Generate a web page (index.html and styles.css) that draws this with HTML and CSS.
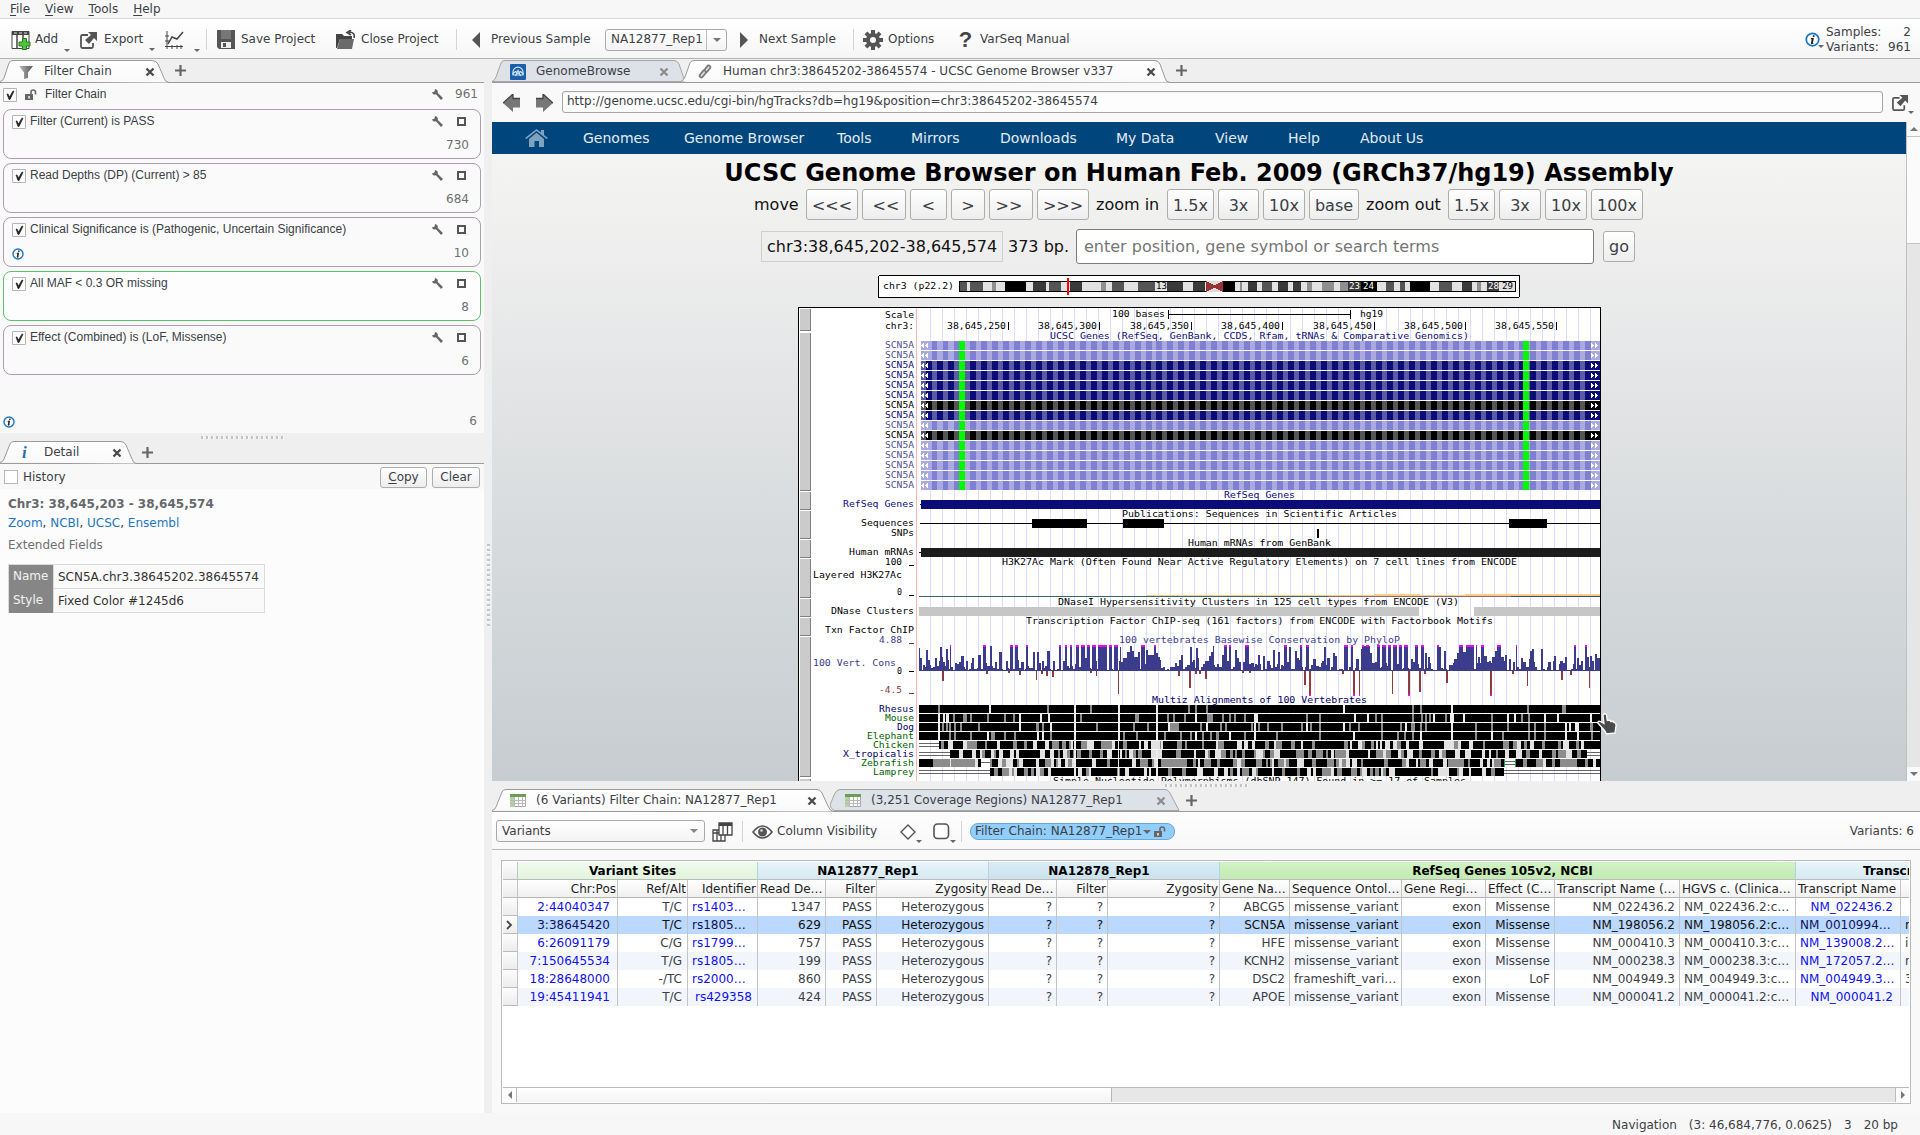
FILE: index.html
```html
<!DOCTYPE html>
<html lang="en">
<head>
<meta charset="utf-8">
<title>VarSeq</title>
<link rel="stylesheet" href="styles.css">
</head>
<body>
<svg class="defs" width="0" height="0" aria-hidden="true">
  <defs>
    <linearGradient id="steel" x1="0" x2="1"><stop offset="0" stop-color="#bbb"/><stop offset="1" stop-color="#555"/></linearGradient>
    <linearGradient id="tabw" x1="0" x2="0" y1="0" y2="1"><stop offset="0" stop-color="#ffffff"/><stop offset="1" stop-color="#f9f9f9"/></linearGradient>
  </defs>
  <symbol id="i-add" viewBox="0 0 20 20"><path d="M1 1.500h17v17h-17z" fill="#fff" stroke="#444"/><path d="M1 1h17v4h-17z" fill="#444"/><path d="M3 3h3M8 3h3M13 3h3" stroke="#ddd"/><path d="M6 5v13M12 5v13" stroke="#444" stroke-width="1.500"/><path d="M11.500 8.500h4v3.500h3.500v4h-3.500v3.500h-4v-3.500H8v-4h3.500z" fill="#4fc43c" stroke="#2c7d1c"/></symbol>
  <symbol id="i-export" viewBox="0 0 18 18"><path d="M8 4H2.500Q1 4 1 5.500v10Q1 17 2.500 17h9q1.500 0 1.500-1.500V12" fill="none" stroke="#555" stroke-width="1.800"/><path d="M8 1h9v9l-3-3-5 6-4-4 6-5z" fill="#555"/></symbol>
  <symbol id="i-chart" viewBox="0 0 20 20"><path d="M3 1v18M1 16.500h18M1 6h4M1 11h4M8 15v4M13 15v4M17 15v4" stroke="#444" fill="none"/><path d="M4 14l4-7 5 2 6-7" fill="none" stroke="#444" stroke-width="1.500"/></symbol>
  <symbol id="i-save" viewBox="0 0 18 19"><path d="M0 0h18v19H2l-2-2z" fill="#555"/><path d="M4 0h10v9H4z" fill="#777"/><path d="M4 12h10v6H4z" fill="#eee"/><path d="M6 13h3v4H6z" fill="#555"/></symbol>
  <symbol id="i-close" viewBox="0 0 21 20"><path d="M1 7V4h6l2 2h8v3H5L2 18H1z" fill="#444"/><path d="M5 9h14l-2 10H2z" fill="#6a6a6a"/><path d="M19 8c1-4-1-6-5-6M16 0l-4 2.500L16 5" stroke="#444" stroke-width="1.600" fill="none"/></symbol>
  <symbol id="i-gear" viewBox="0 0 20 20"><g fill="#555"><circle cx="10" cy="10" r="7"/><path d="M8 0h4v20H8z"/><path d="M0 8h20v4H0z"/><path d="M8 0h4v20H8z" transform="rotate(45 10 10)"/><path d="M8 0h4v20H8z" transform="rotate(-45 10 10)"/></g><circle cx="10" cy="10" r="3" fill="#fafafa"/></symbol>
  <symbol id="i-funnel" viewBox="0 0 14 14"><path d="M0 1h14L9 7.500V13l-4 1V7.500z" fill="url(#steel)"/></symbol>
  <symbol id="i-x" viewBox="0 0 10 10"><path d="M1.500 1.500l7 7M8.500 1.500l-7 7" stroke="currentColor" stroke-width="2.300"/></symbol>
  <symbol id="i-plus" viewBox="0 0 11 11"><path d="M5.500 0v11M0 5.500h11" stroke="#666" stroke-width="2.200"/></symbol>
  <symbol id="i-check" viewBox="0 0 14 14"><path d="M.5.5h13v13H.5z" fill="#fff" stroke="#b5b5b5"/><path d="M4 6l1 0 1.500 3L10 3l1 .3L7 11.500H6z" fill="#222" stroke="#222" stroke-width=".7"/></symbol>
  <symbol id="i-lock" viewBox="0 0 12 11"><path d="M0 5h8v6H0z" fill="#666"/><path d="M6 5V3q0-2 2.200-2T10.500 3v2.500" fill="none" stroke="#666" stroke-width="1.600"/><path d="M3.300 7h1.400v2.500H3.300z" fill="#fff"/></symbol>
  <symbol id="i-wrench" viewBox="0 0 11 11"><path d="M3 0l-.3 2L1.800 3 0 3.200C.5 5.500 2.500 6 4 5.300L9 11l2-2L5.800 4C6.300 2 5 .3 3 0z" fill="#666"/></symbol>
  <symbol id="i-info" viewBox="0 0 12 12"><circle cx="6" cy="6" r="5" fill="#fff" stroke="#1d76c4" stroke-width="1.400"/><path d="M6.200 2.500h1.400v1.400H6.200zM4.800 4.800h2.300l-.8 4h1L5.500 9.800l-.8-.5.600-3.500h-.8z" fill="#222"/></symbol>
  <symbol id="i-left" viewBox="0 0 17 18"><path d="M0 9L10 0v4.500h7v9h-7V18z" fill="#777"/><path d="M0 9L10 0v4.500h7" fill="none" stroke="#444" stroke-width="1.300"/></symbol>
  <symbol id="i-link" viewBox="0 0 14 15"><g fill="#ddd" stroke="#777" stroke-width="1.700"><rect x="7.500" y="0.800" width="3.400" height="8" rx="1.700" transform="rotate(38 9 5)"/><rect x="3" y="5.800" width="3.400" height="8" rx="1.700" transform="rotate(38 4.500 10)"/></g></symbol>
  <symbol id="i-gb" viewBox="0 0 16 16"><rect width="16" height="16" rx="1" fill="#1b5fa8"/><path d="M3 11V8a5 4.800 0 0 1 10 0v3z" fill="none" stroke="#cfe4f8" stroke-width="1.200"/><path d="M2.500 10l3-2.500 2.500 2 2.500-2 3 2.500M5.500 12l2.500-5.500 2.500 5.500" fill="none" stroke="#cfe4f8" stroke-width="1.200"/></symbol>
  <symbol id="i-home" viewBox="0 0 23 18"><path d="M0 9L11.500 0 16 3.500V1h3v5l4 3-1.500 1L11.500 2 1.500 10z" fill="#7fa2bf"/><path d="M4 10l7.500-6.200L19 10v8h-5v-6H9.500v6H4z" fill="#7fa2bf"/></symbol>
  <symbol id="i-grid" viewBox="0 0 16 13"><path d="M.5.5h15v12H.5z" fill="#fdfdfd" stroke="#a5a5a5"/><path d="M0 0h16v3H0z" fill="#6e9e55"/><path d="M0 3h4v10H0z" fill="#b5d3a0"/><path d="M4.500 3v10M8.500 3v10M12.500 3v10M0 6.500h16M0 9.500h16" stroke="#b8b8b8"/></symbol>
  <symbol id="i-tables" viewBox="0 0 21 20"><path d="M1 8h12v11H1zM5 8v11M9 8v11M1 11h12" fill="#fff" stroke="#444" stroke-width="1.300"/><path d="M7 1h13v12H7z" fill="#fff" stroke="#444" stroke-width="1.300"/><path d="M7 1h13v3H7z" fill="#444"/><path d="M11 4v9M15.500 4v9" stroke="#444" stroke-width="1.300"/></symbol>
  <symbol id="i-eye" viewBox="0 0 21 14"><path d="M1 7Q10.500-5 20 7 10.500 19 1 7z" fill="#fff" stroke="#555" stroke-width="1.700"/><circle cx="10.500" cy="7" r="4.500" fill="#555"/><circle cx="9.500" cy="5.500" r="1.300" fill="#ddd"/></symbol>
</svg>

<nav class="menubar"><span><u>F</u>ile</span><span><u>V</u>iew</span><span><u>T</u>ools</span><span><u>H</u>elp</span></nav>

<header class="toolbar">
  <div class="tool t-add"><svg width="20" height="20"><use href="#i-add"/></svg>Add<i class="caret"></i></div>
  <div class="tool t-export"><svg width="18" height="18"><use href="#i-export"/></svg>Export<i class="caret"></i></div>
  <div class="tool"><svg width="20" height="20"><use href="#i-chart"/></svg><i class="caret"></i></div>
  <i class="sep"></i>
  <div class="tool t-save"><svg width="18" height="19"><use href="#i-save"/></svg>Save Project</div>
  <div class="tool t-close"><svg width="21" height="20"><use href="#i-close"/></svg>Close Project</div>
  <i class="sep"></i>
  <div class="tool t-prev"><i class="tri tri-left"></i>Previous Sample</div>
  <div class="combo sample-combo"><span>NA12877_Rep1</span><b><i class="caret"></i></b></div>
  <div class="tool t-next"><i class="tri tri-right"></i>Next Sample</div>
  <i class="sep"></i>
  <div class="tool t-opt"><svg width="20" height="20"><use href="#i-gear"/></svg>Options</div>
  <div class="tool t-manual"><b class="qmark">?</b>VarSeq Manual</div>
  <div class="totals"><svg width="15" height="15"><use href="#i-info"/></svg><i class="caret"></i><dl><dt>Samples:</dt><dd>2</dd><dt>Variants:</dt><dd>961</dd></dl></div>
</header>

<main class="workspace">
  <aside class="side">
    <div class="tabs">
      <div class="tab active tab-filter"><svg class="shape" width="170" height="24"><path d="M0 22.500Q3 22 4 19L9 4Q10 1.500 13 1.500H152Q156 1.500 158 5L164 19Q165 23 169 23.500" fill="url(#tabw)" stroke="#9a9a9a"/></svg><svg width="14" height="14"><use href="#i-funnel"/></svg><span>Filter Chain</span><svg class="x" width="10" height="10"><use href="#i-x"/></svg></div>
      <svg class="plus" width="11" height="11"><use href="#i-plus"/></svg>
    </div>
    <section class="filters">
      <div class="chain-head"><svg width="14" height="14"><use href="#i-check"/></svg><svg class="lock" width="12" height="11"><use href="#i-lock"/></svg><span class="fname">Filter Chain</span><svg class="wrench" width="11" height="11"><use href="#i-wrench"/></svg><span class="count">961</span></div>
      <div class="card"><div class="row"><svg width="14" height="14"><use href="#i-check"/></svg><span class="fname">Filter (Current) is PASS</span><svg class="wrench" width="11" height="11"><use href="#i-wrench"/></svg><i class="sq"></i></div><div class="row low"><span class="count">730</span></div></div>
      <div class="card"><div class="row"><svg width="14" height="14"><use href="#i-check"/></svg><span class="fname">Read Depths (DP) (Current) &gt; 85</span><svg class="wrench" width="11" height="11"><use href="#i-wrench"/></svg><i class="sq"></i></div><div class="row low"><span class="count">684</span></div></div>
      <div class="card"><div class="row"><svg width="14" height="14"><use href="#i-check"/></svg><span class="fname">Clinical Significance is (Pathogenic, Uncertain Significance)</span><svg class="wrench" width="11" height="11"><use href="#i-wrench"/></svg><i class="sq"></i></div><div class="row low"><svg width="12" height="12"><use href="#i-info"/></svg><span class="count">10</span></div></div>
      <div class="card green"><div class="row"><svg width="14" height="14"><use href="#i-check"/></svg><span class="fname">All MAF &lt; 0.3 OR missing</span><svg class="wrench" width="11" height="11"><use href="#i-wrench"/></svg><i class="sq"></i></div><div class="row low"><span class="count">8</span></div></div>
      <div class="card"><div class="row"><svg width="14" height="14"><use href="#i-check"/></svg><span class="fname">Effect (Combined) is (LoF, Missense)</span><svg class="wrench" width="11" height="11"><use href="#i-wrench"/></svg><i class="sq"></i></div><div class="row low"><span class="count">6</span></div></div>
      <div class="chain-foot"><svg width="12" height="12"><use href="#i-info"/></svg><span class="count">6</span></div>
    </section>
    <div class="grip-row"><i class="grip"></i></div>
    <div class="tabs detail-tabs">
      <div class="tab active tab-detail"><svg class="shape" width="137" height="23"><path d="M0 21.500Q3 21 4 18L10 3Q11 .5 14 .5H121Q124 .5 126 4L132 18Q133 22 136 22.500" fill="url(#tabw)" stroke="#9a9a9a"/></svg><em class="ital">i</em><span>Detail</span><svg class="x" width="10" height="10"><use href="#i-x"/></svg></div>
      <svg class="plus" width="11" height="11"><use href="#i-plus"/></svg>
    </div>
    <div class="history"><i class="box"></i><span>History</span><button><u>C</u>opy</button><button>Clear</button></div>
    <section class="detail">
      <h2>Chr3: 38,645,203 - 38,645,574</h2>
      <p class="links"><a>Zoom</a>, <a>NCBI</a>, <a>UCSC</a>, <a>Ensembl</a></p>
      <p class="ext">Extended Fields</p>
      <div class="fields"><b>Name</b><span>SCN5A.chr3.38645202.38645574</span><b>Style</b><span>Fixed Color #1245d6</span></div>
    </section>
  </aside>
  <div class="vgrip"><i></i></div>

  <div class="content">
    <div class="tabs">
      <div class="tab tab-gb"><svg class="shape" width="194" height="24"><path d="M0 22.500Q3 21 4 18L9 4Q10 1.500 13 1.500H182Q185 1.500 187 5L193 22.500z" fill="#dde1e8" stroke="#a5a5a5"/></svg><svg width="16" height="16"><use href="#i-gb"/></svg><span>GenomeBrowse</span><svg class="x dim" width="10" height="10"><use href="#i-x"/></svg></div>
      <div class="tab active tab-ucsc"><svg class="shape" width="490" height="24"><path d="M0 22.500Q3 21 4 18L9 4Q10 1.500 13 1.500H474Q477 1.500 479 5L484 19Q485 23 489 23.500" fill="url(#tabw)" stroke="#9a9a9a"/></svg><svg width="14" height="15"><use href="#i-link"/></svg><span>Human chr3:38645202-38645574 - UCSC Genome Browser v337</span><svg class="x" width="10" height="10"><use href="#i-x"/></svg></div>
      <svg class="plus" width="11" height="11"><use href="#i-plus"/></svg>
    </div>
    <div class="urlbar">
      <svg width="17" height="18"><use href="#i-left"/></svg><svg class="fwd" width="17" height="18"><use href="#i-left"/></svg>
      <div class="url">http://genome.ucsc.edu/cgi-bin/hgTracks?db=hg19&amp;position=chr3:38645202-38645574</div>
      <svg class="ext-icon" width="17" height="17"><use href="#i-export"/></svg><i class="caret"></i>
    </div>
    <div class="browser">
      <div class="page">
        <nav class="ucsc-nav"><svg width="23" height="18"><use href="#i-home"/></svg><span>Genomes</span><span>Genome Browser</span><span>Tools</span><span>Mirrors</span><span>Downloads</span><span>My Data</span><span>View</span><span>Help</span><span>About Us</span></nav>
        <h1>UCSC Genome Browser on Human Feb. 2009 (GRCh37/hg19) Assembly</h1>
        <div class="moves">
          <span class="w-move">move</span><button>&lt;&lt;&lt;</button><button>&lt;&lt;</button><button>&lt;</button><button>&gt;</button><button>&gt;&gt;</button><button>&gt;&gt;&gt;</button>
          <span>zoom in</span><button>1.5x</button><button>3x</button><button>10x</button><button>base</button>
          <span>zoom out</span><button>1.5x</button><button>3x</button><button>10x</button><button>100x</button>
        </div>
        <div class="position"><span class="pos">chr3:38,645,202-38,645,574</span><span class="bp">373 bp.</span><span class="search">enter position, gene symbol or search terms</span><button>go</button></div>
        <svg id="ideogram" class="ideogram" width="642" height="23" viewBox="878 275 642 23"></svg>
        <svg id="tracks" class="tracks" width="803" height="474" viewBox="798 307 803 474"></svg>
        <svg class="hand" width="21" height="22" viewBox="0 0 21 22"><path d="M6 2q2-2.500 3.500 0l.8 5.500 2.500-.3 1 1.300 2.500-.2.800 1.300q2 .3 2 2.400L18 20l-8.500 1L7.500 17.500.8 10q.2-2.500 2.700-1.500L7 10.500z" fill="#4b4b4b" stroke="#fff" stroke-width="1.300"/></svg>
      </div>
      <div class="vscroll"><b><i class="up"></i></b><span class="thumb"></span><b class="bottom"><i class="caret"></i></b></div>
    </div>
    <div class="grip-row mid"><i class="grip"></i></div>
    <div class="tabs table-tabs">
      <div class="tab active tab-var"><svg class="shape" width="342" height="23"><path d="M0 21.500Q3 21 4 18L10 3Q11 .5 14 .5H325Q328 .5 330 4L336 17Q338 21.500 341 22.500" fill="url(#tabw)" stroke="#9a9a9a"/></svg><svg width="16" height="13"><use href="#i-grid"/></svg><span>(6 Variants) Filter Chain: NA12877_Rep1</span><svg class="x" width="10" height="10"><use href="#i-x"/></svg></div>
      <div class="tab tab-cov"><svg class="shape" width="350" height="23"><path d="M0 16L5 4Q7 .5 10 .5H335Q338 .5 340 4L349 21.500H4Q1 20 0 16z" fill="#dde1e8" stroke="#a5a5a5"/></svg><svg width="16" height="13"><use href="#i-grid"/></svg><span>(3,251 Coverage Regions) NA12877_Rep1</span><svg class="x dim" width="10" height="10"><use href="#i-x"/></svg></div>
      <svg class="plus" width="11" height="11"><use href="#i-plus"/></svg>
    </div>
    <div class="tablebar">
      <div class="combo wide"><span>Variants</span><i class="caret big"></i></div>
      <svg width="21" height="20"><use href="#i-tables"/></svg>
      <i class="sep"></i>
      <div class="tool"><svg width="21" height="14"><use href="#i-eye"/></svg>Column Visibility</div>
      <div class="tool"><svg width="16" height="16" viewBox="0 0 16 16"><path d="M8 1l7 7-7 7-7-7z" fill="#fff" stroke="#555" stroke-width="1.400"/></svg><i class="caret"></i></div>
      <div class="tool"><svg width="17" height="17" viewBox="0 0 17 17"><rect x="1" y="1" width="14.500" height="14.500" rx="3.500" fill="#fff" stroke="#555" stroke-width="1.600"/></svg><i class="caret"></i></div>
      <i class="sep"></i>
      <div class="pill">Filter Chain: NA12877_Rep1<i class="caret big"></i><svg width="12" height="11"><use href="#i-lock"/></svg></div>
      <div class="nvar">Variants: 6</div>
    </div>
    <div class="tablewrap">
      <div class="frame">
        <div id="grid" class="grid"></div>
        <div class="hscroll"><b><i class="lf"></i></b><span></span><em></em><b><i class="rt"></i></b></div>
      </div>
    </div>
  </div>
</main>
<footer class="status"><span>Navigation</span><span>(3: 46,684,776, 0.0625)</span><span>3</span><span>20 bp</span></footer>
<script src="app.js"></script>
</body>
</html>
```
FILE: styles.css
```css
* { box-sizing: border-box; }
body { margin: 0; width: 1920px; height: 1135px; overflow: hidden; background: #efefef; color: #3b4045; font: 12px/15px "DejaVu Sans", sans-serif; display: flex; flex-direction: column; }
svg { display: block; flex: none; }
.defs { position: absolute; }
i, em { font-style: normal; }
button { font: inherit; color: #3b4045; background: linear-gradient(#fff, #ededed); border: 1px solid #adadad; border-radius: 3px; padding: 0; }
u { text-decoration: underline; text-underline-offset: 2px; }
.caret { width: 0; height: 0; border: 3px solid transparent; border-top: 3px solid #666; border-bottom: 0; flex: none; }
.caret.big { border-width: 4px 4px 0; }
.menubar { height: 19px; background: #f7f7f7; border-bottom: 1px solid #d9d9d9; display: flex; padding-left: 10px; gap: 15px; line-height: 19px; }
.toolbar { height: 40px; border-bottom: 1px solid #b4b4b4; background: linear-gradient(#fff, #f6f6f6); padding: 2px 0 0 11px; display: grid; align-items: center;
  grid-template-columns: 69px 84px 42px 11px 118px 121px 16px 133px 135px 113px 10px 95px 847px 106px; }
.tool { display: flex; align-items: center; white-space: nowrap; gap: 4px; }
.tool .caret, .totals .caret { align-self: flex-end; margin-bottom: -2px; }
.t-add .caret { margin-left: 2px; }
.t-export { gap: 6px; }
.t-export .caret { margin-left: 0; }
.toolbar .tool:nth-child(3) { gap: 10px; }
.t-save { gap: 6px; }
.t-close { gap: 5px; }
.t-prev, .t-next { gap: 11px; }
.t-opt { gap: 5px; }
.t-manual { gap: 7px; }
.sep { width: 1px; height: 21px; background: #d4d4d4; }
.tri { width: 0; height: 0; border: 8px solid transparent; }
.tri-left { border-right: 8px solid #555; border-left: 0; }
.tri-right { border-left: 8px solid #555; border-right: 0; }
.qmark { font: bold 22px/20px "Liberation Sans", sans-serif; color: #444; width: 15px; text-align: center; }
.combo { display: flex; border: 1px solid #a9a9a9; border-radius: 3px; background: linear-gradient(#fff, #f4f4f4); height: 22px; align-items: center; padding-left: 5px; }
.sample-combo { width: 122px; align-self: center; }
.sample-combo b { margin-left: auto; border-left: 1px solid #bbb; width: 20px; height: 20px; display: flex; align-items: center; justify-content: center; }
.sample-combo .caret { border-width: 4px 4px 0; border-top-color: #777; }
.totals { display: flex; align-items: center; width: 106px; }
.totals .caret { margin: 0 2px 7px -2px; }
.totals dl { margin: 0; display: grid; grid-template-columns: 58px 27px; font-size: 12px; }
.totals dd { margin: 0; text-align: right; }

.workspace { display: flex; height: 1054px; }
.side { width: 484px; display: flex; flex-direction: column; }
.tabs { height: 24px; display: flex; background: #efefef; border-bottom: 1px solid #9a9a9a; }
.tab { position: relative; display: flex; align-items: center; height: 24px; padding-top: 1px; }
.tab > *:not(.shape) { position: relative; }
.tab .shape { position: absolute; left: 0; top: 0; }
.tab .x { margin-left: auto; color: #4a4a4a; }
.tab .dim { color: #8d8d8d; }
.plus { align-self: center; }
.tab-filter { width: 169px; padding-left: 19px; padding-right: 14px; gap: 11px; }
.tab-filter + .plus { margin-left: 6px; }
.filters { height: 350px; background: #f9f9f9; padding: 4px 4px 0 3px; }
.chain-head { height: 15px; display: flex; align-items: center; margin-bottom: 7px; }
.chain-head .lock { margin: 0 8px; }
.fname { font: 12px/15px "Liberation Sans", Arial, sans-serif; }
.wrench { margin-left: auto; }
.count { color: #6d7073; margin-left: auto; }
.chain-head .wrench { margin-right: 12px; }
.chain-head .count { margin: 0; width: 23px; text-align: right; margin-right: 2px; }
.card { height: 50px; width: 478px; margin-bottom: 4px; border: 1px solid #ae9cb0; border-radius: 8px; background: #fafafa; padding: 4px 11px 0 8px; }
.card.green { border-color: #5fbf6c; background: #fdfdfd; }
.row { display: flex; align-items: center; height: 15px; }
.row .fname { margin-left: 4px; }
.row.low { margin-top: 9px; }
.sq { width: 9px; height: 9px; border: 2px solid #555; margin: 0 3px 0 14px; }
.chain-foot { display: flex; align-items: center; margin-top: 39px; padding-right: 3px; }
.grip-row { height: 8px; padding: 3px 0 0 201px; }
.grip-row.mid { height: 8px; padding: 3px 0 0 673px; }
.grip { display: block; width: 84px; height: 3px; background: repeating-linear-gradient(90deg, #c4c4c4 0 2px, #fafafa 2px 3px, transparent 3px 5px); }
.detail-tabs { height: 23px; }
.detail-tabs .tab, .table-tabs .tab { height: 23px; padding-top: 0; }
.tab-detail { width: 137px; padding: 0 16px 0 22px; }
.tab-detail .x { margin-right: -1px; }
.tab-detail span { margin-left: 14px; }
.tab-detail + .plus { margin-left: 5px; }
.ital { font: italic bold 17px/18px "Liberation Serif", serif; color: #2b6fb0; width: 8px; }
.history { height: 25px; background: #f8f8f8; display: flex; align-items: center; padding: 1px 4px 0; }
.box { width: 14px; height: 14px; border: 1px solid #b8b8b8; background: #fff; margin-right: 5px; }
.history button { width: 47px; height: 21px; margin-left: auto; padding-top: 1px; }
.history button:last-child { width: 48px; margin-left: 5px; }
.detail { flex: 1; background: #fcfcfc; padding: 7px 8px; }
.detail h2 { margin: 0; font-size: 12px; line-height: 17px; color: #66696c; }
.detail p { margin: 0; }
.links { line-height: 21px; color: #333; }
.links a { color: #1d76c4; }
.detail .ext { color: #6d7073; line-height: 23px; margin-bottom: 7px; }
.fields { display: grid; grid-template-columns: 44px 211px; width: 257px; border: 1px solid #dadada; background: #fafafa; height: 49px; }
.fields b { background: #868686; color: #f2f2f2; font-weight: 400; padding-left: 4px; line-height: 22px; }
.fields span { border: 1px solid #dadada; border-width: 0 0 1px 1px; padding-left: 4px; line-height: 24px; color: #333; height: 24px; }
.vgrip { width: 8px; padding: 485px 0 0 3px; }
.vgrip i { display: block; width: 3px; height: 84px; background: repeating-linear-gradient(#c4c4c4 0 2px, #fafafa 2px 3px, transparent 3px 5px); }

.content { width: 1428px; display: flex; flex-direction: column; }
.tab-gb { width: 189px; padding: 1px 12px 0 18px; gap: 10px; }
.tab-ucsc { width: 489px; padding: 1px 14px 0 17px; gap: 11px; z-index: 1; }
.tab-ucsc + .plus { margin-left: 6px; }
.urlbar { height: 39px; background: #f9f9f9; display: flex; align-items: center; padding-left: 11px; }
.fwd { transform: scaleX(-1); margin: 0 9px 0 16px; }
.url { width: 1321px; height: 22px; border: 1px solid #a5a5a5; border-radius: 3px; background: linear-gradient(#f4f4f4, #fdfdfd 3px); padding-left: 4px; line-height: 19px; margin-top: -1px; }
.ext-icon { margin-left: 9px; }
.urlbar .caret { align-self: flex-end; margin: 0 0 8px -1px; }
.browser { height: 659px; display: flex; }
.page { width: 1414px; position: relative; overflow: hidden; color: #111; background: linear-gradient(#f4f4f2 32px, #ededed 140px, #d9dcde 390px, #c6cdd1); font-size: 16px; line-height: 20px; }
.ucsc-nav { height: 32px; background: #00457c; color: #e4ecf3; font-size: 14px; display: grid; align-items: center; padding-left: 33px; grid-template-columns: 58px 101px 153px 74px 89px 116px 99px 73px 72px 100px; white-space: nowrap; }
h1 { margin: 3px 0 0; font-size: 24px; line-height: 33px; color: #000; text-align: center; }
.moves { display: flex; gap: 4px; height: 31px; align-items: center; white-space: nowrap; padding-left: 262px; line-height: 31px; margin-top: -1px; }
.moves button, .position button { height: 31px; flex: none; }
.moves button { width: 42px; }
.moves span { flex: none; }
.moves .w-move { width: 48px; }
.moves button:nth-child(2), .moves button:nth-child(7), .moves button:nth-child(17) { width: 52px; }
.moves button:nth-child(3) { width: 44px; padding-left: 4px; }
.moves button:nth-child(4) { width: 37px; }
.moves button:nth-child(5) { width: 34px; }
.moves button:nth-child(6) { width: 44px; padding-right: 4px; }
.moves button:nth-child(9), .moves button:nth-child(14) { width: 47px; }
.moves button:nth-child(10) { width: 41px; }
.moves button:nth-child(12) { width: 50px; }
.moves span:nth-child(8) { width: 70px; padding-left: 3px; }
.moves span:nth-child(13) { width: 81px; padding-left: 3px; }
.position { display: flex; align-items: center; height: 35px; margin-top: 9px; padding-left: 269px; white-space: nowrap; }
.pos { border: 1px solid #cfcfcf; width: 242px; height: 31px; line-height: 29px; padding-left: 5px; }
.bp { width: 73px; padding-left: 5px; }
.search { width: 518px; height: 35px; border: 1px solid #7b7b7b; border-radius: 3px; background: #fff; color: #757575; line-height: 33px; padding-left: 7px; }
.position button { width: 32px; margin-left: 9px; }
.ideogram { margin: 11px 0 0 386px; }
.tracks { margin: 9px 0 0 306px; }
.tracks text, .ideogram text { font-family: "DejaVu Sans Mono", monospace; font-size: 8.3px; }
.hand { position: absolute; left: 1105px; top: 591px; }
.vscroll { width: 14px; background: #e6e6e6; border-left: 1px solid #c0c0c0; display: flex; flex-direction: column; }
.vscroll b { height: 14px; background: #fafafa; display: flex; align-items: center; justify-content: center; }
.vscroll .thumb { height: 108px; background: #fbfbfb; border: 1px solid #c4c4c4; border-width: 1px 0; }
.vscroll .bottom { margin-top: auto; }
.vscroll i { border-width: 4px 4px 0; border-top-color: #777; }
.vscroll .up { border: 4px solid transparent; border-top: 0; border-bottom-color: #777; }
.table-tabs { height: 23px; }
.tab-var { width: 338px; padding: 0 13px 0 18px; gap: 10px; z-index: 1; }
.tab-cov { width: 350px; padding: 0 14px 0 15px; gap: 10px; }
.table-tabs .plus { margin-left: 6px; }
.tablebar { height: 38px; background: linear-gradient(#fdfdfd, #f8f8f8); border-bottom: 1px solid #b8b8b8; display: grid; align-items: center; padding: 2px 0 0 4px;
  grid-template-columns: 216px 30px 10px 148px 33px 28px 9px 300px 644px; }
.wide { width: 209px; }
.wide .caret { margin-left: auto; margin-right: 6px; border-top-color: #888; }
.tablebar .combo { margin-top: -1px; }
.tablebar .tool { gap: 4px; }
.tablebar .tool:nth-child(5), .tablebar .tool:nth-child(6) { gap: 0; }
.tablebar .tool .caret { margin-bottom: -3px; }
.pill { width: 205px; height: 17px; border: 1px solid #6aa9da; border-radius: 8px; background: #92cefc; display: flex; align-items: center; padding-left: 4px; gap: 1px; white-space: nowrap; }
.pill svg { margin-left: 2px; }
.nvar { text-align: right; }
.tablewrap { background: #f9f9f9; padding: 10px 0 0 9px; flex: 1; }
.frame { width: 1410px; height: 244px; border: 1px solid #bababa; background: #fff; padding: 1px; display: flex; flex-direction: column; }
.grid { display: grid; overflow: hidden; width: 1406px; grid-auto-rows: 18px;
  grid-template-columns: 15px 100px 70px 70px 68px 51px 112px 68px 51px 112px 70px 112px 84px 69px 125px 116px 105px 8px; }
.grid > * { overflow: hidden; white-space: nowrap; height: 18px; border-right: 1px solid #c4c4c4; text-align: right; }
.grid .grp { font-weight: 700; color: #000; text-align: center; line-height: 19px; padding-right: 10px; border-right-color: #b3d3df; border-bottom: 1px solid #bbb; background: linear-gradient(#e9f5fc, #d6e8f1); }
.grid .grp.site { background: linear-gradient(#effbee, #e3f4dd); }
.grid .grp.gene { background: linear-gradient(#d2f3c4, #c2eab2); }
.grid .grp.mid { background: linear-gradient(#d9edf7, #cbe1ec); }
.grid .grp.last { text-align: left; padding: 0 0 0 67px; border-right: 0; }
.grid .hd { color: #222; background: linear-gradient(#fff, #f0f0f0); border-bottom: 1px solid #b5b5b5; padding-right: 1px; line-height: 19px; }
.grid .hd.cut { padding: 0 0 0 2px; }
.grid .rh { background: linear-gradient(#fdfdfd, #ececec); border-bottom: 1px solid #bbb; text-align: center; }
.grid .cell { padding-right: 4px; line-height: 18px; }
.grid .c1 { padding-right: 7px; }
.grid .c2 { padding-right: 5px; }
.grid .cut { text-align: left; padding: 0 0 0 4px; }
.grid .alt { background: #f2f6fc; }
.grid .sel { background: #bbd8fe; color: #111; }
.grid .lnk { color: #1010f0; }
.grid .sel.lnk { color: #10105c; }
.grid .end { border-right: 0; }
.hscroll { margin-top: auto; height: 15px; border-top: 1px solid #bbb; display: flex; background: #e7e7e7; }
.hscroll b { width: 14px; flex: none; background: #fdfdfd; border-right: 1px solid #bbb; display: flex; align-items: center; justify-content: center; }
.hscroll b:last-child { border: 0; border-left: 1px solid #bbb; }
.hscroll span { width: 595px; background: linear-gradient(#fefefe, #f4f4f4); border-right: 1px solid #b5b5b5; }
.hscroll em { flex: 1; }
.lf, .rt { border: 4px solid transparent; }
.lf { border-left: 0; border-right-color: #777; }
.rt { border-right: 0; border-left-color: #777; }
.status { height: 22px; background: #f7f7f7; display: flex; justify-content: flex-end; gap: 12px; padding: 5px 22px 0 0; line-height: 15px; }
```
FILE: app.js
```js
let out = '';
const rect = (x, y, w, h, fill) => { out += `<rect x="${x}" y="${y}" width="${w}" height="${h}" fill="${fill}"/>`; };
// Fixed-pitch label: every character takes six pixels.
const label = (t, x, y, fill, end) => {
  const w = t.length * 6 - 1;
  const s = t.replace(/&/g, '&amp;').replace(/</g, '&lt;').replace(/>/g, '&gt;');
  out += `<text x="${end ? x - w : x}" y="${y}" textLength="${w}" lengthAdjust="spacingAndGlyphs" fill="${fill}">${s}</text>`;
};
const flush = id => { document.getElementById(id).innerHTML = `<g shape-rendering="crispEdges">${out}</g>`; out = ''; };
let seed = 7;
const rnd = () => (seed = (seed * 16807) % 2147483647) / 2147483647;

// Chromosome ideogram
out += '<rect x="878.5" y="275.5" width="641" height="22" rx="1.5" fill="#fff" stroke="#000"/>';
rect(959, 281, 557, 11, '#000');
rect(960, 282, 555, 9, '#e2e2e2');
const D = '#3a3a3a', M = '#555', G = '#8f8f8f', K = '#000';
[[960,7,M],[970,13,M],[992,4,G],[1005,21,K],[1033,13,D],[1049,12,M],[1070,12,D],[1101,5,G],[1112,12,M],[1138,17,M],[1167,16,D],[1193,12,D],
 [1223,12,K],[1240,2,G],[1248,9,D],[1262,10,M],[1278,10,D],[1293,8,D],[1307,5,G],[1322,12,G],[1340,8,G],[1348,13,D],[1361,16,K],[1386,8,M],
 [1400,5,M],[1410,20,K],[1439,13,M],[1462,10,D],[1477,4,G],[1487,12,D]].forEach(b => rect(b[0], 282, b[1], 9, b[2]));
rect(1206, 281, 17, 11, '#ddd');
out += '<path d="M1206 281l8.500 4 8.500-4v11l-8.500-4-8.500 4z" fill="#993333"/>';
rect(1067, 278, 2, 17, '#f00');
label('chr3 (p22.2)', 883, 289, '#000');
label('13', 1156, 289, '#000');
label('23', 1349, 289, '#fff');
label('24', 1363, 289, '#fff');
label('28', 1488, 289, '#fff');
label('29', 1502, 289, '#000');
flush('ideogram');

// Track image
rect(798, 307, 803, 500, '#000');
rect(799, 308, 801, 500, '#fff');
for (let x = 930; x < 1600; x += 12) rect(x, 308, 1, 480, '#dcdcff');
rect(916, 308, 1, 480, '#ffb4b4');
[[309,22],[333,158],[492,18],[511,28],[540,18],[559,39],[599,18],[618,18],[637,140],[779,10]].forEach(([y, h]) => {
  rect(800, y, 11, h, '#808080'); rect(800, y, 10, h - 1, '#cbcbcb');
});
const NAVY = '#0c0c78', LAB = '#505091';
label('Scale', 914, 318, K, 1);
label('chr3:', 914, 329, K, 1);
label('100 bases', 1112, 317, K);
rect(1168, 310, 1, 9, K); rect(1168, 314, 183, 1, K); rect(1350, 310, 1, 9, K);
label('hg19', 1360, 317, K);
[1008, 1099, 1191, 1282, 1374, 1465, 1556].forEach((x, i) => {
  label('38,645,' + (250 + 50 * i), x - 61, 329, K); rect(x, 322, 1, 8, K);
});
label('UCSC Genes (RefSeq, GenBank, CCDS, Rfam, tRNAs & Comparative Genomics)', 1050, 339, NAVY);
'llnnnnknlklllll'.split('').forEach((k, i) => {
  const y = 341 + i * 10;
  const [base, alt, name] = { l: ['#aaaae0', '#8080d2', LAB], n: [NAVY, '#5a5aa5', NAVY], k: [K, '#555', K] }[k];
  rect(921, y, 679, 9, base);
  for (let n = 0; n < 61; n++) {
    let x = Math.round(921 + n * 10.975), w = 5;
    if (k === 'l' && n > 3) { x += 5; w = 6; }
    if (k === 'l' && n === 0) continue;
    if (x < 1594) rect(x, y, w, 9, alt);
  }
  rect(959, y, 6, 9, '#00f800');
  rect(1523, y, 6, 9, '#00f800');
  out += `<path d="M924 ${y + 1}v7l-3-3.500zM928 ${y + 1}v7l-3-3.500zM1591 ${y + 1}v7l3-3.500zM1595 ${y + 1}v7l3-3.500z" fill="#fff"/>`;
  label('SCN5A', 914, y + 7, name, 1);
});
label('RefSeq Genes', 1224, 498, NAVY);
label('RefSeq Genes', 914, 507, NAVY, 1);
rect(921, 500, 679, 9, NAVY); rect(920, 504, 1, 1, NAVY);
label('Publications: Sequences in Scientific Articles', 1122, 517, K);
label('Sequences', 914, 526, K, 1);
rect(920, 523, 680, 1, K);
rect(1032, 519, 55, 9, K); rect(1123, 519, 41, 9, K); rect(1509, 519, 38, 9, K);
label('SNPs', 914, 536, K, 1);
rect(1317, 529, 2, 9, K);
label('Human mRNAs from GenBank', 1188, 546, K);
label('Human mRNAs', 914, 555, K, 1);
rect(921, 548, 679, 9, '#1c1c1c'); rect(919, 552, 2, 1, K);
label('H3K27Ac Mark (Often Found Near Active Regulatory Elements) on 7 cell lines from ENCODE', 1002, 565, K);
label('100', 902, 565, K, 1); rect(909, 565, 5, 1, K);
label('Layered H3K27Ac', 902, 578, K, 1);
label('0', 902, 595, K, 1); rect(909, 595, 5, 1, K);
rect(919, 596, 409, 1, '#3f6368'); rect(1328, 596, 183, 1, '#8a6a70'); rect(1511, 596, 89, 1, '#34487c');
rect(1146, 595, 454, 1, '#f8cf84'); rect(1374, 594, 46, 1, '#f8cf84'); rect(1465, 594, 135, 1, '#f8cf84');
label('DNaseI Hypersensitivity Clusters in 125 cell types from ENCODE (V3)', 1058, 605, K);
label('DNase Clusters', 914, 614, K, 1);
rect(919, 607, 500, 9, '#c6c6c6'); rect(1474, 607, 126, 9, '#c6c6c6');
label('Transcription Factor ChIP-seq (161 factors) from ENCODE with Factorbook Motifs', 1026, 624, K);
label('Txn Factor ChIP', 914, 633, K, 1);
const BLUE = '#3c3c8c', RED = '#8c3c3c';
label('4.88', 902, 643, BLUE, 1); rect(909, 643, 5, 1, BLUE);
label('100 vertebrates Basewise Conservation by PhyloP', 1119, 643, BLUE);
label('100 Vert. Cons', 896, 666, BLUE, 1);
label('0', 902, 674, K, 1); rect(909, 671, 5, 1, K);
label('-4.5', 902, 693, RED, 1); rect(909, 693, 5, 1, RED);

// Conservation scores: low background plus [x, width, height] peaks; 26 is the clipping height.
for (let x = 919; x < 1600; x += 2) { const h = 1 + Math.floor(rnd() * rnd() * 13); rect(x, 671 - h, 2, h, BLUE); }
[[919,1,23],[920,2,13],[926,2,21],[928,2,11],[935,2,13],[940,2,24],[942,1,14],[946,2,22],[950,1,26],[955,2,8],[961,3,15],[966,2,10],[972,2,13],
 [978,3,16],[983,3,26],[990,2,25],[995,2,9],[999,3,19],[1006,2,10],[1010,3,26],[1015,3,26],[1021,3,9],[1026,2,26],[1033,2,19],[1037,2,19],[1042,2,10],
 [1047,3,20],[1053,2,10],[1059,2,26],[1065,2,26],[1070,2,26],[1076,3,26],[1081,4,26],[1087,3,26],[1092,4,26],[1098,9,26],[1109,3,26],[1114,4,26],[1120,1,24],
 [1123,4,13],[1127,3,19],[1130,2,25],[1132,2,20],[1134,4,14],[1138,2,19],[1141,4,26],[1146,2,21],[1148,6,16],[1154,2,26],[1156,2,18],[1158,2,14],[1160,1,11],
 [1170,5,4],[1179,2,11],[1181,2,16],[1190,2,24],[1196,2,23],[1207,2,10],[1209,2,15],[1211,2,19],[1213,1,25],
 [1222,2,16],[1224,3,26],[1229,2,26],[1235,2,21],[1237,2,13],[1245,4,26],[1251,3,8],[1258,2,16],[1263,2,15],[1267,3,10],[1273,2,21],[1278,2,19],
 [1284,3,26],[1289,2,24],[1295,2,20],[1297,2,13],[1300,2,26],[1306,3,26],[1311,2,6],[1313,3,12],[1322,2,10],[1324,2,24],[1327,3,13],[1333,2,18],[1335,2,15],[1344,4,26],[1351,2,26],[1356,3,12],
 [1361,2,22],[1362,2,26],[1364,6,25],[1366,3,26],[1370,2,18],[1372,3,8],[1377,3,26],[1382,4,26],[1388,3,26],[1393,4,26],[1399,3,26],[1404,4,26],[1411,2,12],[1413,2,9],[1415,3,26],[1421,3,26],
 [1425,2,18],[1428,2,14],[1437,2,26],[1439,2,24],[1444,2,20],[1449,4,6],[1454,3,12],[1457,2,18],[1459,4,26],[1463,3,19],[1466,8,26],[1476,1,26],[1478,2,14],[1481,3,26],[1484,3,15],[1487,3,9],[1492,3,14],
 [1495,2,20],[1497,4,26],[1501,3,14],[1505,2,16],[1509,2,12],[1516,1,26],[1521,2,13],[1523,3,9],[1530,2,20],[1532,2,22],[1541,2,22],[1548,3,9],[1554,2,15],[1560,3,10],[1565,2,14],
 [1574,2,26],[1581,2,10],[1585,2,26],[1587,2,14],[1590,2,15],[1592,2,10],[1595,2,17],[1597,3,13]].forEach(([x, w, h]) => {
  rect(x, 671 - Math.min(h, 25), w, Math.min(h, 25), BLUE);
  if (h === 26) rect(x, 645, w, 2, '#ff00ff');
});
rect(919, 670, 681, 1, BLUE);
[[942,2,10],[986,2,3],[1008,2,2],[1019,2,4],[1036,1,9],[1041,2,3],[1046,2,5],[1052,2,6],[1090,2,2],[1096,1,5],[1118,1,23],[1178,2,5],[1189,2,17],[1195,2,3],[1199,2,3],
 [1205,2,8],[1242,2,2],[1249,2,2],[1304,2,14],[1309,2,25],[1342,2,3],[1353,2,25],[1359,1,25],[1392,1,23],[1408,2,25],[1419,2,21],[1424,2,3],[1446,2,12],[1490,2,25],
 [1512,2,3],[1527,1,15],[1561,2,9],[1570,2,4],[1589,1,17]].forEach(([x, w, h]) => {
  rect(x, 671, w, Math.min(h, 23), RED);
  if (h === 25) rect(x, 694, w, 2, '#ff00ff');
});
label('Multiz Alignments of 100 Vertebrates', 1152, 703, '#000064');

// Alignment rows: [name, colour, first x, last x, density of generated gaps]
[['Rhesus','#000064',919,1600,0],['Mouse','#006400',919,1600,0],['Dog','#000064',919,1600,0],['Elephant','#006400',919,1600,0],
 ['Chicken','#006400',939,1600,.42],['X_tropicalis','#000064',950,1587,.42],['Zebrafish','#006400',919,1600,.46],['Lamprey','#006400',990,1504,.4]].forEach(([n, c, a, b, d], i) => {
  const y = 705 + 9 * i;
  label(n, 914, y + 7, c, 1);
  if (a > 919) { rect(919, y + 2, a - 919, 1, '#666'); rect(919, y + 5, a - 919, 1, '#666'); }
  if (b < 1600) { rect(b, y + 2, 1600 - b, 1, '#666'); rect(b, y + 5, 1600 - b, 1, '#666'); }
  rect(a, y, b - a, 8, K);
  for (let x = a + 2; d && x < b - 6;) {
    const w = 2 + Math.floor(rnd() * 3);
    if (rnd() < d) rect(x, y, w, 8, rnd() < .55 ? '#8c8c8c' : '#e2e2e2');
    x += w;
  }
});
// Gaps read as "x", "x w" for a light one and ":width" when wider than two pixels
const gaps = [
  '938 989w 1047 1074w 1090 1118w 1156w 1188 1195 1206 1343w 1412 1420 1451w 1527 1562:4',
  '938w 943w 946w:3 953 963:4 970 987 1004 1013 1019w 1040w 1048w 1074w 1080 1118w 1135:4 1156w 1167 1173 1184 1195w 1207:6 1222 1229 1234 1244 1254w:4 1306 1319 1354w 1367w 1375 1381 1412 1421 1425 1429 1433w 1445 1450w:4 1463w 1491 1507w 1514w 1521 1528 1544w 1557w 1590w',
  '938w 942 946 949 954 960 978 1019w 1036:3 1042 1050w 1074w 1096 1118w 1133 1147 1156w 1168w 1170:9 1200 1206w 1220 1225 1251 1254w 1258 1267 1281 1301 1306w 1310 1319 1343w 1349 1358 1381 1400 1405w 1411:4 1420 1425 1451w 1475 1491 1507 1528 1534 1544 1565w 1569w 1575w:4 1590:3',
  '938w 949 954 970 987w 991:4 1004 1014 1037w 1042w 1050 1074w 1118w 1123 1136 1156w 1164 1180 1190 1195w 1202 1210 1216:3 1229w 1244 1254w 1276 1353w 1319 1381 1397 1404 1412 1420w 1451w 1475 1491w 1502 1528 1534 1544 1565w 1577w 1591'];
gaps.forEach((row, i) => row.split(' ').forEach(g => {
  const m = g.match(/^(\d+)(w?)(?::(\d+))?$/);
  rect(+m[1], 705 + 9 * i, +(m[3] || 2), 8, m[2] ? '#ececec' : '#8c8c8c');
}));
[[1074, 2], [1118, 1], [1156, 2]].forEach(([x, w]) => { for (let i = 4; i < 8; i++) rect(x, 705 + 9 * i, w, 8, '#ececec'); });
rect(1151, 741, 9, 8, '#e2e2e2'); rect(1161, 759, 26, 8, '#8c8c8c'); rect(933, 759, 17, 8, '#8c8c8c'); rect(951, 759, 23, 8, '#8c8c8c');
rect(1335, 750, 11, 8, '#8c8c8c'); rect(1448, 759, 12, 8, '#8c8c8c'); rect(1560, 759, 15, 8, '#8c8c8c'); rect(1447, 741, 7, 8, '#e2e2e2');
rect(981, 759, 9, 8, '#fff'); rect(981, 762, 9, 1, '#666');
rect(1504, 759, 12, 8, '#fff'); rect(1505, 761, 10, 1, '#666'); rect(1505, 764, 10, 1, '#666');
rect(1504, 759, 1, 8, '#20b040'); rect(1515, 759, 1, 8, '#20b040');
label('Simple Nucleotide Polymorphisms (dbSNP 147) Found in >= 17 of Samples', 1053, 784, K);
rect(1600, 307, 1, 480, K);
flush('tracks');

// Variant table
const heads = ['Chr:Pos','Ref/Alt','Identifier','Read De…','Filter','Zygosity','Read De…','Filter','Zygosity','Gene Na…','Sequence Ontol…','Gene Regi…','Effect (C…','Transcript Name (…','HGVS c. (Clinica…','Transcript Name',''];
const rows = [
  ['2:44040347','T/C','rs1403…','1347','ABCG5','missense_variant','Missense','NM_022436.2','NM_022436.2',''],
  ['3:38645420','T/C','rs1805…','629','SCN5A','missense_variant','Missense','NM_198056.2','NM_0010994…','r'],
  ['6:26091179','C/G','rs1799…','757','HFE','missense_variant','Missense','NM_000410.3','NM_139008.2…','i'],
  ['7:150645534','T/G','rs1805…','199','KCNH2','missense_variant','Missense','NM_000238.3','NM_172057.2…','r'],
  ['18:28648000','-/TC','rs2000…','860','DSC2','frameshift_vari…','LoF','NM_004949.3','NM_004949.3…','3'],
  ['19:45411941','T/C','rs429358','424','APOE','missense_variant','Missense','NM_000041.2','NM_000041.2','']];
let html = '<div class="rh"></div>';
[['Variant Sites',3,'site'],['NA12877_Rep1',3,''],['NA12878_Rep1',3,'mid'],['RefSeq Genes 105v2, NCBI',6,'gene'],['Transcripts',2,'last']].forEach(([t, s, c]) => {
  html += `<div class="grp ${c}" style="grid-column: span ${s}">${t}</div>`;
});
html += '<div class="rh"></div>' + heads.map((h, j) => `<div class="hd${h.endsWith('…') || j === 15 ? ' cut' : ''}${j === 16 ? ' end' : ''}">${h}</div>`).join('');
rows.forEach((r, i) => {
  const cells = [r[0], r[1], r[2], r[3], 'PASS', 'Heterozygous', '?', '?', '?', r[4], r[5], 'exon', r[6], r[7], r[7] + ':c…', r[8], r[9]];
  const tone = i === 1 ? ' sel' : i % 2 ? ' alt' : '';
  html += `<div class="rh">${i === 1 ? '<svg width="12" height="17" viewBox="0 0 12 17"><path d="M4 5l4 4-4 4" fill="none" stroke="#444" stroke-width="1.800"/></svg>' : ''}</div>`;
  cells.forEach((t, j) => {
    const kind = j === 0 || (j === 15 && !t.endsWith('…')) ? ' c1' : j < 3 ? ' c2' : '';
    const cut = t.endsWith('…') || j === 10 || j === 16 ? ' cut' : '';
    const lnk = [0, 2, 15].includes(j) ? ' lnk' : '';
    html += `<div class="cell${kind}${cut}${lnk}${tone}${j === 16 ? ' end' : ''}">${t}</div>`;
  });
});
document.getElementById('grid').innerHTML = html;
```
